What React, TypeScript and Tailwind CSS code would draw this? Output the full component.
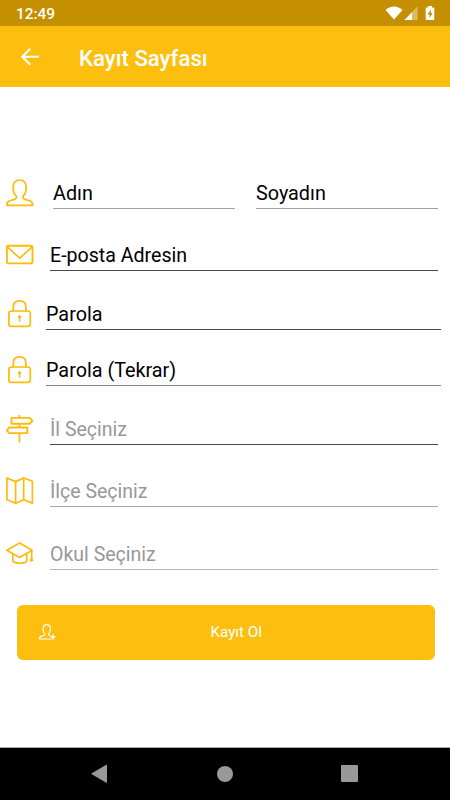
import type { ReactNode } from 'react';

interface FieldProps {
  label: string;
  className?: string;
}

function Field({ label, className = '' }: FieldProps) {
  return (
    <div className={`h-[30px] border-b leading-[30px] whitespace-nowrap ${className}`}>
      {label}
    </div>
  );
}

interface RowProps {
  icon: ReactNode;
  className?: string;
  children: ReactNode;
}

function Row({ icon, className = '', children }: RowProps) {
  return (
    <div className={`flex h-[30px] pl-[6px] ${className}`}>
      <svg
        viewBox="0 0 28 28"
        className="h-7 w-7 shrink-0"
        fill="none"
        stroke="#fdbc0b"
        strokeWidth="1.7"
        strokeLinejoin="round"
        strokeLinecap="round"
      >
        {icon}
      </svg>
      {children}
    </div>
  );
}

const personPath =
  'M10.3 17.2C8.2 15.4 7.2 12.4 7.2 8.8C7.2 3.6 9.6 1 13.7 1S20.2 3.6 20.2 8.8C20.2 12.4 19.2 15.4 17.1 17.2C16.5 19 17.4 20 19.6 20.6L23.8 21.8C26 22.5 26.7 23.7 26.7 26.4H.8C.8 23.7 1.5 22.5 3.7 21.8L7.8 20.6C10 20 10.9 19 10.3 17.2Z';

const personIcon = <path d={personPath} />;

const mailIcon = (
  <>
    <rect x="0.9" y="4.8" width="25.6" height="17.6" rx="1.8" strokeWidth="1.9" />
    <path d="M1.3 5.8L13.7 17.2L26.2 5.8" />
  </>
);

const lockIcon = (
  <>
    <rect x="2.9" y="11" width="21.4" height="15.4" rx="2.4" />
    <path d="M7.3 11V7C7.3 3 10 .9 13.6 .9S19.9 3 19.9 7V11" />
    <circle cx="13.6" cy="16.8" r="1" fill="#fdbc0b" strokeWidth="1.2" />
    <path d="M13.6 17V21" strokeWidth="1.4" />
  </>
);

const signIcon = (
  <>
    <path d="M13.5 .6V2.7M13.5 9V12.3M13.5 18.4V26.7" />
    <path d="M5.5 2.9H23.7L26.4 5.8L23.7 8.7H5.5Z" strokeWidth="1.9" />
    <path d="M21.4 12.5H3.2L.9 15.3L3.2 18.1H21.4Z" strokeWidth="1.9" />
  </>
);

const mapIcon = (
  <>
    <path d="M.9 1L9.6 4.6L17.7 1L26.4 4.3V26.1L17.7 22.8L9.6 26.3L.9 22.8Z" />
    <path d="M9.6 4.6V26.3M17.7 1V22.8" />
  </>
);

const capIcon = (
  <>
    <path d="M.8 10.3L13.6 3L26.1 10.3L13.6 17.4Z" />
    <path d="M6.8 13.8V21.2C9.4 23.9 18.4 23.9 20.7 21.2V13.8M25.7 10.6V18.6" />
    <circle cx="25.4" cy="20.1" r="1.3" fill="#fdbc0b" strokeWidth="1" />
  </>
);

export default function App() {
  return (
    <div className="flex h-[800px] w-[450px] flex-col overflow-hidden bg-white font-[Roboto,sans-serif] text-black">
      {/* Status bar */}
      <div className="flex h-[26px] shrink-0 items-center justify-between bg-[#c48f00] pr-[15px] pl-[16px] text-white">
        <span className="pt-[2px] text-[15.4px] leading-5 font-medium">12:49</span>
        <div className="flex items-center">
          <svg viewBox="0 0 18 16" className="h-4 w-[18px]" fill="white">
            <path d="M.5 5C5.5 .3 12.5 .3 17.5 5L9 14.6Z" />
          </svg>
          <svg viewBox="0 0 14 16" className="ml-px h-4 w-3.5" fill="white">
            <path d="M13.5 1.5V15H.5Z" opacity=".4" />
            <path d="M8 7.2V15H.5Z" />
          </svg>
          <svg viewBox="0 0 10 16" className="ml-[7px] h-4 w-[10px]" fill="white">
            <path d="M3 1H7V2.5H8.5Q9.3 2.5 9.3 3.3V14.2Q9.3 15 8.5 15H1.5Q.7 15 .7 14.2V3.3Q.7 2.5 1.5 2.5H3Z" />
            <path d="M5.8 4.5L2.6 9.5H4.6V13.2L7.6 8H5.8Z" fill="#c48f00" />
          </svg>
        </div>
      </div>

      {/* Header */}
      <header className="flex h-[61px] shrink-0 items-center bg-[#fcbf0f] pl-[20px] text-white">
        <svg viewBox="0 0 20 20" className="h-5 w-5" fill="none" stroke="white" strokeWidth="2">
          <path d="M18.7 9.7H2.2M10.3 1.6L2.2 9.7L10.3 17.8" />
        </svg>
        <h1 className="ml-[39px] pt-[3px] text-[22.2px] leading-7 font-medium">Kayıt Sayfası</h1>
      </header>

      {/* Form */}
      <main className="grow pt-[92px]">
        <Row icon={personIcon}>
          <Field label="Adın" className="ml-[19px] w-[182px] border-[#a0a0a0] text-[19.8px]" />
          <Field label="Soyadın" className="ml-[21px] w-[182px] border-[#a0a0a0] text-[19.8px]" />
        </Row>
        <Row icon={mailIcon} className="mt-[32px]">
          <Field label="E-posta Adresin" className="ml-[16px] w-[388px] border-[#4a4a4a] text-[19.6px]" />
        </Row>
        <Row icon={lockIcon} className="mt-[29px]">
          <Field label="Parola" className="ml-[12px] w-[395px] border-[#4a4a4a] text-[19.8px]" />
        </Row>
        <Row icon={lockIcon} className="mt-[26px]">
          <Field label="Parola (Tekrar)" className="ml-[12px] w-[395px] border-[#858585] text-[19.8px]" />
        </Row>
        <Row icon={signIcon} className="mt-[29px]">
          <Field label="İl Seçiniz" className="ml-[16px] w-[388px] border-[#4a4a4a] text-[19.5px] text-[#989898]" />
        </Row>
        <Row icon={mapIcon} className="mt-[32px]">
          <Field label="İlçe Seçiniz" className="ml-[16px] w-[388px] border-[#a8a8a8] text-[19.5px] text-[#989898]" />
        </Row>
        <Row icon={capIcon} className="mt-[33px]">
          <Field label="Okul Seçiniz" className="ml-[16px] w-[388px] border-[#b8b8b8] text-[19.5px] text-[#989898]" />
        </Row>

        <button
          type="button"
          className="mt-[34.5px] ml-[17px] flex h-[55px] w-[417.5px] items-center rounded-[6px] bg-[#fcbf0f] pl-[22px] text-white"
        >
          <svg
            viewBox="0 0 30 30"
            className="h-[17px] w-[17px]"
            fill="none"
            stroke="white"
            strokeWidth="2"
            strokeLinejoin="round"
          >
            <path d={personPath} />
            <path d="M24.5 17.5V27.5M19.5 22.5H29" stroke="#fcbf0f" strokeWidth="5" />
            <path d="M24.5 18V27M20 22.5H29" strokeWidth="2.4" />
          </svg>
          <span className="grow pr-[38px] pl-[20px] pt-px text-center text-[15.2px]">Kayıt Ol</span>
        </button>
      </main>

      {/* Navigation bar */}
      <nav className="flex h-[53px] shrink-0 items-center justify-between border-t border-[#aaaaaa] bg-black pr-[92px] pb-px pl-[90px]">
        <svg viewBox="0 0 18 20" className="h-5 w-[18px]" fill="#999999">
          <path d="M1 9.8L15.8 1Q17 .4 17 1.6V18Q17 19.2 15.8 18.6Z" />
        </svg>
        <div className="h-4 w-4 rounded-full bg-[#999999]" />
        <div className="h-[17px] w-[17px] rounded-[1px] bg-[#999999]" />
      </nav>
    </div>
  );
}
